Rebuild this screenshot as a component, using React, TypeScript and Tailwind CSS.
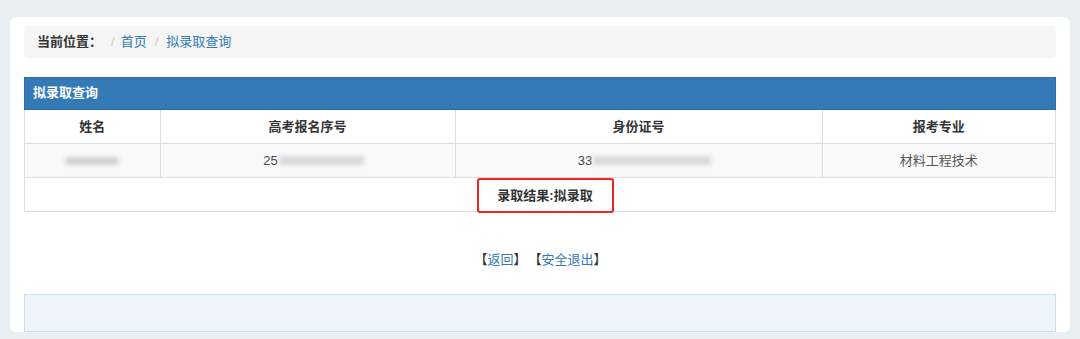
export default function App() {
  const font = { fontFamily: '"Liberation Sans", "Noto Sans CJK SC", sans-serif' };
  return (
    <div className="w-[1080px] h-[339px] bg-[#e8eff2] pt-[17px] px-[10px] overflow-hidden" style={font}>
      <div className="bg-white rounded-[6px] h-[315px] px-[14px] pt-[9px] flex flex-col">
        <div className="h-[32px] bg-[#f5f5f5] rounded-[4px] flex items-center pl-[13px] text-[13px]">
          <span className="font-bold text-[#333]">当前位置：</span>
          <span className="text-[#ccc] ml-[9px] mr-[6px]">/</span>
          <a className="text-[#337ab7]">首页</a>
          <span className="text-[#ccc] mx-[8px]">/</span>
          <a className="text-[#337ab7]">拟录取查询</a>
        </div>
        <div className="mt-[19px] border border-[#ddd]">
          <div className="h-[33px] bg-[#337ab7] flex items-center pl-[8px] text-white font-bold text-[13px] -mx-px -mt-px border border-[#2e6da4]">
            拟录取查询
          </div>
          <table className="w-full border-collapse text-[13px] text-[#333]">
            <tbody>
              <tr className="h-[34px]">
                <th className="w-[135px] border-r border-b border-[#ddd] font-bold">姓名</th>
                <th className="w-[295px] border-r border-b border-[#ddd] font-bold">高考报名序号</th>
                <th className="w-[367px] border-r border-b border-[#ddd] font-bold">身份证号</th>
                <th className="border-b border-[#ddd] font-bold">报考专业</th>
              </tr>
              <tr className="h-[34px] bg-[#f9f9f9]">
                <td className="border-r border-b border-[#ddd]">
                  <div className="flex justify-center">
                    <div className="w-[54px] h-[8px] bg-[#d2d0d4] blur-[2px] rounded-sm" />
                  </div>
                </td>
                <td className="border-r border-b border-[#ddd] text-[#444]">
                  <div className="flex justify-center items-center pl-[12px]">
                    <span>25</span>
                    <div className="w-[85px] h-[9px] bg-[#d9d7db] blur-[2px] ml-[1px]" />
                  </div>
                </td>
                <td className="border-r border-b border-[#ddd] text-[#444]">
                  <div className="flex justify-center items-center pl-[12px]">
                    <span>33</span>
                    <div className="w-[118px] h-[9px] bg-[#dad8dc] blur-[2px] ml-[1px]" />
                  </div>
                </td>
                <td className="border-b border-[#ddd] text-center text-[#555]">材料工程技术</td>
              </tr>
              <tr className="h-[33px]">
                <td colSpan={4} className="text-center">
                  <div className="flex justify-center pl-[10px]">
                    <div className="w-[137px] h-[35px] -mb-[2px] border-2 border-[#f02222] rounded-[3px] flex items-center justify-center font-bold text-[#333]">
                      录取结果:拟录取
                    </div>
                  </div>
                </td>
              </tr>
            </tbody>
          </table>
        </div>
        <div className="mt-[38px] flex justify-center text-[13px] text-[#333] pl-[1px]">
          <span>【<a className="text-[#337ab7]">返回</a>】</span>
          <span className="ml-[2px]">【<a className="text-[#337ab7]">安全退出</a>】</span>
        </div>
        <div className="mt-[24px] h-[39px] bg-[#edf4fb] border border-[#c8dff0]" />
      </div>
    </div>
  );
}
